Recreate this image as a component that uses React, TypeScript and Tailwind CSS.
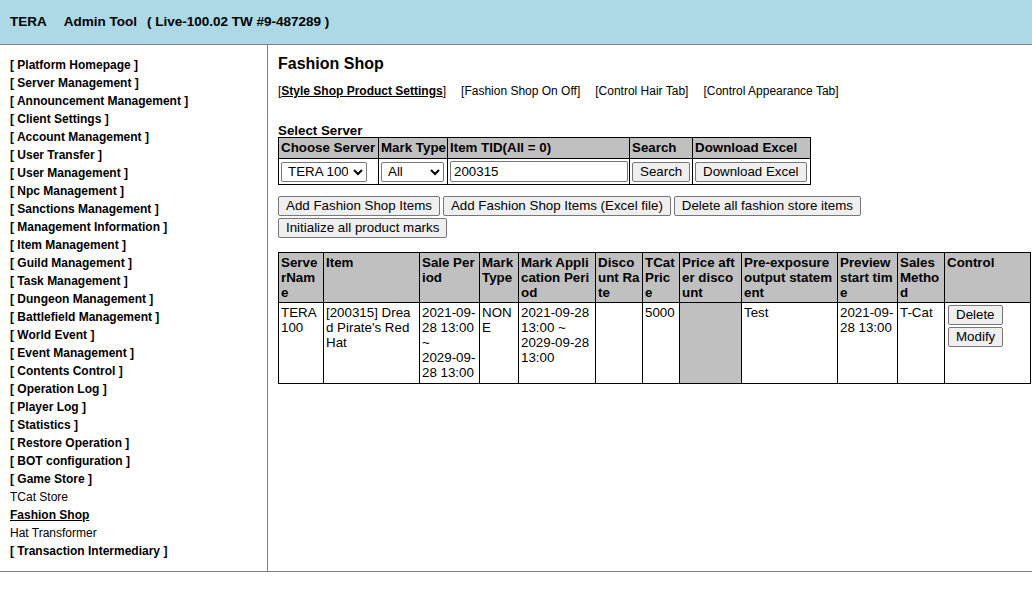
import React from 'react'

const menu: { label: string; kind?: 'plain' | 'active' }[] = [
  { label: '[ Platform Homepage ]' },
  { label: '[ Server Management ]' },
  { label: '[ Announcement Management ]' },
  { label: '[ Client Settings ]' },
  { label: '[ Account Management ]' },
  { label: '[ User Transfer ]' },
  { label: '[ User Management ]' },
  { label: '[ Npc Management ]' },
  { label: '[ Sanctions Management ]' },
  { label: '[ Management Information ]' },
  { label: '[ Item Management ]' },
  { label: '[ Guild Management ]' },
  { label: '[ Task Management ]' },
  { label: '[ Dungeon Management ]' },
  { label: '[ Battlefield Management ]' },
  { label: '[ World Event ]' },
  { label: '[ Event Management ]' },
  { label: '[ Contents Control ]' },
  { label: '[ Operation Log ]' },
  { label: '[ Player Log ]' },
  { label: '[ Statistics ]' },
  { label: '[ Restore Operation ]' },
  { label: '[ BOT configuration ]' },
  { label: '[ Game Store ]' },
  { label: 'TCat Store', kind: 'plain' },
  { label: 'Fashion Shop', kind: 'active' },
  { label: 'Hat Transformer', kind: 'plain' },
  { label: '[ Transaction Intermediary ]' },
]

const columns = [
  { title: 'ServerName', w: 'w-[45px]' },
  { title: 'Item', w: 'w-[96px]' },
  { title: 'Sale Period', w: 'w-[60px]' },
  { title: 'Mark Type', w: 'w-[39px]' },
  { title: 'Mark Application Period', w: 'w-[77px]' },
  { title: 'Discount Rate', w: 'w-[47px]' },
  { title: 'TCat Price', w: 'w-[37px]' },
  { title: 'Price after discount', w: 'w-[62px]' },
  { title: 'Pre-exposure output statement', w: 'w-[96px]' },
  { title: 'Preview start time', w: 'w-[60px]' },
  { title: 'Sales Method', w: 'w-[47px]' },
  { title: 'Control', w: 'w-[86px]' },
]

function Btn({ children }: { children: React.ReactNode }) {
  return (
    <button className="h-[20px] px-[7px] bg-[#efefef] border border-[#767676] rounded-[2px] text-[13.333px] leading-[16px] text-black whitespace-nowrap">
      {children}
    </button>
  )
}

export default function App() {
  const th = 'border border-black bg-[#c0c0c0] px-[2px] py-[2px] text-left align-top font-bold'
  const td = 'border border-black px-[2px] py-[2px] align-top break-all'

  return (
    <div className="w-[1032px] h-[591px] bg-white text-black font-['Liberation_Sans',Arial,sans-serif]">
      {/* Top bar */}
      <div className="h-[45px] bg-[#add8e6] border-b border-[#808080] flex items-center px-[10px] text-[13.5px] font-bold">
        <span>TERA</span>
        <span className="ml-[17px]">Admin Tool</span>
        <span className="ml-[10px]">( Live-100.02 TW #9-487289 )</span>
      </div>

      <div className="flex border-b border-[#808080]">
        {/* Sidebar */}
        <div className="w-[268px] shrink-0 border-r border-[#808080] pl-[10px] pt-[11px] pb-[11px]">
          {menu.map((m) => (
            <div
              key={m.label}
              className={
                'text-[12px] leading-[18px] ' +
                (m.kind === 'plain' ? 'font-normal' : m.kind === 'active' ? 'font-bold underline' : 'font-bold')
              }
            >
              {m.label}
            </div>
          ))}
        </div>

        {/* Content */}
        <div className="flex-1 pl-[10px] pt-[9px]">
          <h2 className="text-[16px] leading-[20px] font-bold">Fashion Shop</h2>

          <div className="mt-[8px] flex gap-[15px] text-[12px] leading-[18px]">
            <span>
              [<span className="font-bold underline">Style Shop Product Settings</span>]
            </span>
            <span>[Fashion Shop On Off]</span>
            <span>[Control Hair Tab]</span>
            <span>[Control Appearance Tab]</span>
          </div>

          <div className="mt-[25px] text-[13.333px] leading-[12px] font-bold">Select Server</div>

          <table className="border-collapse border border-black text-[13.333px] leading-[16px] table-fixed w-[532px]">
            <colgroup>
              <col className="w-[100px]" />
              <col className="w-[69px]" />
              <col className="w-[182px]" />
              <col className="w-[63px]" />
              <col className="w-[118px]" />
            </colgroup>
            <thead>
              <tr>
                <th className={th + ' py-[1px] whitespace-nowrap'}>Choose Server</th>
                <th className={th + ' py-[1px] whitespace-nowrap'}>Mark Type</th>
                <th className={th + ' py-[1px] whitespace-nowrap'}>Item TID(All = 0)</th>
                <th className={th + ' py-[1px] whitespace-nowrap'}>Search</th>
                <th className={th + ' py-[1px] whitespace-nowrap'}>Download Excel</th>
              </tr>
            </thead>
            <tbody>
              <tr>
                <td className="border border-black px-[2px] py-[2px]">
                  <select className="h-[20px] w-[86px] border border-[#767676] rounded-[2px] text-[13.333px] px-[2px] bg-white">
                    <option>TERA 100</option>
                  </select>
                </td>
                <td className="border border-black px-[2px] py-[2px]">
                  <select className="h-[20px] w-[63px] border border-[#767676] rounded-[2px] text-[13.333px] px-[2px] bg-white">
                    <option>All</option>
                  </select>
                </td>
                <td className="border border-black px-[2px] py-[2px]">
                  <input
                    defaultValue="200315"
                    className="h-[21px] w-[178px] border border-[#767676] rounded-[2px] text-[13.333px] px-[3px]"
                  />
                </td>
                <td className="border border-black px-[2px] py-[2px]">
                  <Btn>Search</Btn>
                </td>
                <td className="border border-black px-[2px] py-[2px]">
                  <Btn>Download Excel</Btn>
                </td>
              </tr>
            </tbody>
          </table>

          <div className="mt-[11px] flex flex-wrap gap-x-[3px] gap-y-[2px] w-[600px]">
            <Btn>Add Fashion Shop Items</Btn>
            <Btn>Add Fashion Shop Items (Excel file)</Btn>
            <Btn>Delete all fashion store items</Btn>
            <Btn>Initialize all product marks</Btn>
          </div>

          <table className="mt-[14px] border-collapse border border-black text-[13.333px] leading-[15px] table-fixed w-[753px]">
            <colgroup>
              {columns.map((c) => (
                <col key={c.title} className={c.w} />
              ))}
            </colgroup>
            <thead>
              <tr className="h-[49px]">
                {columns.map((c) => (
                  <th key={c.title} className={th + ' break-all'}>
                    {c.title}
                  </th>
                ))}
              </tr>
            </thead>
            <tbody>
              <tr className="h-[81px]">
                <td className={td}>TERA 100</td>
                <td className={td}>[200315] Dread Pirate's Red Hat</td>
                <td className={td}>
                  2021-09-28 13:00
                  <br />~<br />
                  2029-09-28 13:00
                </td>
                <td className={td}>NONE</td>
                <td className={td}>
                  2021-09-28 13:00 ~<br />
                  2029-09-28 13:00
                </td>
                <td className={td}></td>
                <td className={td}>5000</td>
                <td className={td + ' bg-[#c0c0c0]'}></td>
                <td className={td}>Test</td>
                <td className={td}>2021-09-28 13:00</td>
                <td className={td}>T-Cat</td>
                <td className={td + ' pt-[2px]'}>
                  <div className="flex flex-col items-start gap-[2px] pl-[1px]">
                    <Btn>Delete</Btn>
                    <Btn>Modify</Btn>
                  </div>
                </td>
              </tr>
            </tbody>
          </table>
        </div>
      </div>
    </div>
  )
}
